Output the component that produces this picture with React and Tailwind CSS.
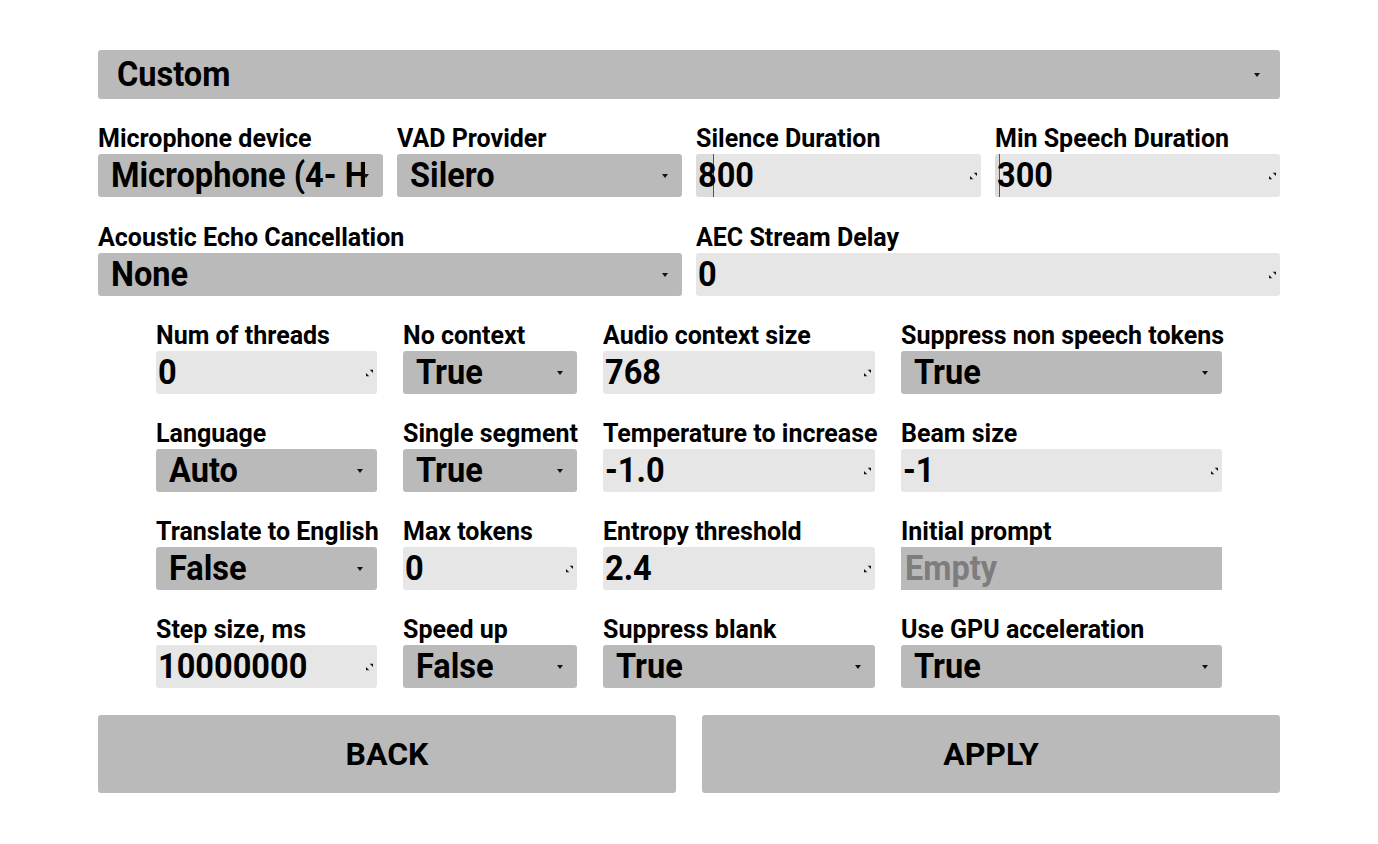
import React from "react";

const font = { fontFamily: "Roboto, 'Liberation Sans', sans-serif" };

function Arrow({ className = "" }) {
  return (
    <svg
      className={`absolute top-1/2 -translate-y-1/2 ${className}`}
      width="6"
      height="4"
      viewBox="0 0 6 4"
    >
      <path d="M0 0 H6 L3 4 Z" fill="#111" />
    </svg>
  );
}

function Grip() {
  return (
    <svg
      className="absolute right-[4px] top-1/2 -translate-y-1/2"
      width="7"
      height="7"
      viewBox="0 0 7 7"
    >
      <path d="M3.5 0 H7 V3.5 Z" fill="#111" />
      <path d="M0 3.5 L3.5 7 H0 Z" fill="#111" />
    </svg>
  );
}

// value text: the app's font renders a bit narrower than Roboto Bold
function Value({ children, color = "text-black" }) {
  return (
    <span
      className={`inline-block origin-left scale-x-[0.93] whitespace-nowrap font-bold text-[35px] leading-none ${color}`}
    >
      {children}
    </span>
  );
}

function Label({ children }) {
  return (
    <div className="h-[28px] mb-[2px] text-[25px] leading-[29px] font-bold text-black whitespace-nowrap">
      {children}
    </div>
  );
}

function Spinner({ value, pad = "pl-[13px] pr-[18px]", arrow = "right-[14px]", big = false }) {
  return (
    <div
      className={`relative bg-[#bababa] rounded-[3px] ${big ? "h-[49px]" : "h-[43px]"} flex items-center ${pad}`}
    >
      <div className="flex-1 min-w-0 overflow-hidden">
        <Value>{value}</Value>
      </div>
      <Arrow className={arrow} />
    </div>
  );
}

function Input({ value, cursor }) {
  return (
    <div className="relative bg-[#e6e6e6] rounded-[3px] h-[43px] flex items-center pl-[2px] overflow-hidden">
      {cursor && (
        <div
          className="absolute left-0 top-0 bottom-0 bg-[#dcdcdc] border-r border-[#555]"
          style={{ width: cursor }}
        />
      )}
      <div className="relative">
        <Value>{value}</Value>
      </div>
      <Grip />
    </div>
  );
}

function Field({ label, type, value, cursor }) {
  return (
    <div className="flex flex-col">
      <Label>{label}</Label>
      {type === "spin" && <Spinner value={value} />}
      {type === "input" && <Input value={value} cursor={cursor} />}
      {type === "empty" && (
        <div className="bg-[#bababa] h-[43px] flex items-center pl-[4px]">
          <Value color="text-[#7d7d7d]">{value}</Value>
        </div>
      )}
    </div>
  );
}

const whisper = [
  ["Num of threads", "input", "0"],
  ["No context", "spin", "True"],
  ["Audio context size", "input", "768"],
  ["Suppress non speech tokens", "spin", "True"],
  ["Language", "spin", "Auto"],
  ["Single segment", "spin", "True"],
  ["Temperature to increase", "input", "-1.0"],
  ["Beam size", "input", "-1"],
  ["Translate to English", "spin", "False"],
  ["Max tokens", "input", "0"],
  ["Entropy threshold", "input", "2.4"],
  ["Initial prompt", "empty", "Empty"],
  ["Step size, ms", "input", "10000000"],
  ["Speed up", "spin", "False"],
  ["Suppress blank", "spin", "True"],
  ["Use GPU acceleration", "spin", "True"],
];

export default function App() {
  return (
    <div className="w-[1378px] h-[844px] bg-white" style={font}>
      <div className="w-[1182px] ml-[98px] pt-[50px] flex flex-col">
        <Spinner value="Custom" big pad="pl-[19px] pr-[26px]" arrow="right-[20px]" />

        <div className="grid grid-cols-4 gap-x-[14px] mt-[25px]">
          <Field label="Microphone device" type="spin" value="Microphone (4- High Definition Audio)" />
          <Field label="VAD Provider" type="spin" value="Silero" />
          <Field label="Silence Duration" type="input" value="800" cursor={18} />
          <Field label="Min Speech Duration" type="input" value="300" cursor={5} />
        </div>

        <div className="grid grid-cols-2 gap-x-[14px] mt-[26px]">
          <Field label="Acoustic Echo Cancellation" type="spin" value="None" />
          <Field label="AEC Stream Delay" type="input" value="0" />
        </div>

        <div className="ml-[58px] w-[1066px] grid grid-cols-[221px_174px_272px_321px] gap-x-[26px] gap-y-[25px] mt-[25px]">
          {whisper.map(([label, type, value]) => (
            <Field key={label} label={label} type={type} value={value} />
          ))}
        </div>

        <div className="grid grid-cols-2 gap-x-[26px] mt-[27px]">
          <button className="h-[78px] bg-[#bababa] rounded-[3px] text-[32px] font-bold text-black">
            BACK
          </button>
          <button className="h-[78px] bg-[#bababa] rounded-[3px] text-[32px] font-bold text-black">
            APPLY
          </button>
        </div>
      </div>
    </div>
  );
}
